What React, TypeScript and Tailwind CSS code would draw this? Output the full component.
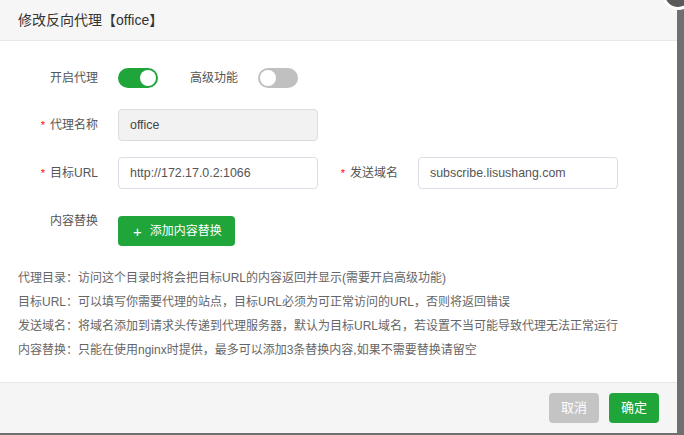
import React, { useState } from 'react';

const font = { fontFamily: '"Liberation Sans", "Noto Sans CJK SC", sans-serif' };

function Toggle({ on, onClick }: { on: boolean; onClick: () => void }) {
  return (
    <button
      onClick={onClick}
      className={`relative w-[40px] h-[20px] rounded-full ${on ? 'bg-[#20a53a]' : 'bg-[#c0c0c0]'}`}
    >
      <span
        className={`absolute top-[2px] w-[16px] h-[16px] rounded-full bg-white ${on ? 'left-[22px]' : 'left-[2px]'}`}
      />
    </button>
  );
}

function Label({ text, required }: { text: string; required?: boolean }) {
  return (
    <div className="w-[80px] text-right text-[12px] text-[#555] leading-[32px] shrink-0">
      {required && <span className="text-[#f00] mr-[5px] text-[11px]">*</span>}
      {text}
    </div>
  );
}

export default function App() {
  const [proxyOn, setProxyOn] = useState(true);
  const [advanced, setAdvanced] = useState(false);

  const tips = [
    '代理目录：访问这个目录时将会把目标URL的内容返回并显示(需要开启高级功能)',
    '目标URL：可以填写你需要代理的站点，目标URL必须为可正常访问的URL，否则将返回错误',
    '发送域名：将域名添加到请求头传递到代理服务器，默认为目标URL域名，若设置不当可能导致代理无法正常运行',
    '内容替换：只能在使用nginx时提供，最多可以添加3条替换内容,如果不需要替换请留空',
  ];

  return (
    <div className="relative w-[684px] h-[435px] bg-[#6f6f6f] overflow-hidden" style={font}>
      <div className="w-[677px] h-[433px] bg-white flex flex-col">
        {/* 标题 */}
        <div className="h-[41px] shrink-0 bg-[#f6f6f6] border-b border-[#e8e8e8] px-[18px] flex items-center text-[14px] font-normal text-[#333]">
          修改反向代理【office】
        </div>

        {/* 表单 */}
        <div className="flex-1 pt-[21px] px-[18px]">
          <div className="flex items-center h-[32px]">
            <Label text="开启代理" />
            <div className="ml-[20px] flex">
              <Toggle on={proxyOn} onClick={() => setProxyOn(!proxyOn)} />
            </div>
            <div className="ml-[32px] text-[12px] text-[#555]">高级功能</div>
            <div className="ml-[20px] flex">
              <Toggle on={advanced} onClick={() => setAdvanced(!advanced)} />
            </div>
          </div>

          <div className="flex items-center mt-[15px]">
            <Label text="代理名称" required />
            <input
              disabled
              value="office"
              readOnly
              className="ml-[20px] w-[200px] h-[32px] px-[11px] rounded-[4px] border border-[#dcdcdc] bg-[#f2f2f2] text-[12.4px] text-[#444] outline-none"
            />
          </div>

          <div className="flex items-center mt-[16px]">
            <Label text="目标URL" required />
            <input
              defaultValue="http://172.17.0.2:1066"
              className="ml-[20px] w-[200px] h-[32px] px-[11px] rounded-[4px] border border-[#dcdce6] bg-white text-[12.4px] text-[#555] outline-none"
            />
            <Label text="发送域名" required />
            <input
              defaultValue="subscribe.lisushang.com"
              className="ml-[20px] w-[200px] h-[32px] px-[11px] rounded-[4px] border border-[#dcdce6] bg-white text-[12.4px] text-[#555] outline-none"
            />
          </div>

          <div className="flex items-start mt-[16px]">
            <Label text="内容替换" />
            <button className="ml-[20px] mt-[11px] h-[30px] pl-[15px] pr-[13px] rounded-[4px] bg-[#20a53a] text-white text-[12px] flex items-center">
              <span className="text-[15px] font-light mr-[8px] leading-none">+</span>添加内容替换
            </button>
          </div>

          <div className="mt-[20px] text-[12px] text-[#666] leading-[24px]">
            {tips.map((t, i) => (
              <div key={i}>{t}</div>
            ))}
          </div>
        </div>

        {/* 底部按钮 */}
        <div className="h-[51px] shrink-0 bg-[#f4f5f4] border-t border-[#e6e6e6] flex items-center justify-end gap-[10px] pr-[18px]">
          <button className="w-[50px] h-[30px] rounded-[4px] bg-[#c4c4c4] text-white text-[13px]">取消</button>
          <button className="w-[50px] h-[30px] rounded-[4px] bg-[#20a53a] text-white text-[13px]">确定</button>
        </div>
      </div>

      {/* 关闭按钮 */}
      <div className="absolute -top-[22px] -right-[10px] w-[32px] h-[32px] rounded-full bg-[#5a5a5a] border-[3px] border-white" />
    </div>
  );
}
